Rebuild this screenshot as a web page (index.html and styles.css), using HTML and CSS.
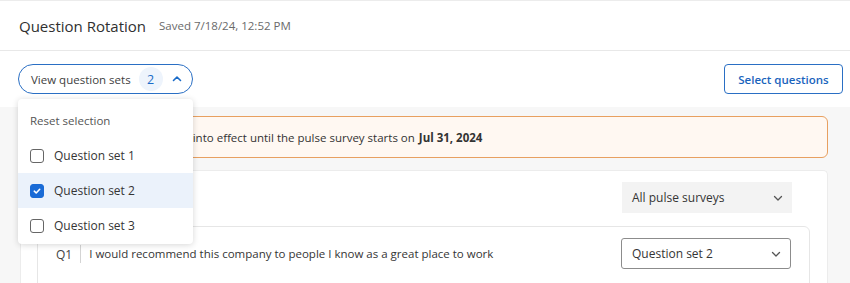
FILE: index.html
```html
<!DOCTYPE html>
<html>
<head>
<meta charset="utf-8">
<link rel="stylesheet" href="styles.css">
</head>
<body>
<header class="header">
  <h1 class="title">Question Rotation</h1>
  <span class="saved">Saved 7/18/24, 12:52 PM</span>
</header>
<div class="toolbar">
  <button class="pill">
    <span>View question sets</span>
    <span class="badge">2</span>
    <svg class="chev" width="10" height="10" viewBox="0 0 10 10"><path d="M1.5 6.5 L5 3 L8.5 6.5" fill="none" stroke="#1a6bc8" stroke-width="1.6" stroke-linecap="round" stroke-linejoin="round"/></svg>
  </button>
  <button class="select-btn">Select questions</button>
  <div class="menu">
    <div class="menu-reset">Reset selection</div>
    <label class="menu-item"><span class="cb"></span>Question set 1</label>
    <label class="menu-item active"><span class="cb checked"><svg width="10" height="10" viewBox="0 0 10 10"><path d="M2.3 5.2 L4.2 7 L7.7 3.3" fill="none" stroke="#fff" stroke-width="1.6" stroke-linecap="round" stroke-linejoin="round"/></svg></span>Question set 2</label>
    <label class="menu-item"><span class="cb"></span>Question set 3</label>
  </div>
</div>
<main class="main">
  <div class="banner">Question changes won't go into effect until the pulse survey starts on <b>Jul 31, 2024</b></div>
  <section class="card">
    <div class="card-top">
      <div class="dd dd-flat"><span>All pulse surveys</span><svg width="10" height="10" viewBox="0 0 10 10"><path d="M1.5 3.5 L5 7 L8.5 3.5" fill="none" stroke="#555" stroke-width="1.3" stroke-linecap="round" stroke-linejoin="round"/></svg></div>
    </div>
    <div class="row">
      <span class="qnum">Q1</span>
      <span class="qtext">I would recommend this company to people I know as a great place to work</span>
      <div class="dd dd-border"><span>Question set 2</span><svg width="10" height="10" viewBox="0 0 10 10"><path d="M1.5 3.5 L5 7 L8.5 3.5" fill="none" stroke="#555" stroke-width="1.3" stroke-linecap="round" stroke-linejoin="round"/></svg></div>
    </div>
  </section>
</main>
</body>
</html>
```
FILE: styles.css
```css
* { box-sizing: border-box; }
html, body { margin: 0; padding: 0; }
body {
  width: 850px;
  height: 283px;
  overflow: hidden;
  background: #fff;
  font-family: "Open Sans", "Noto Sans", sans-serif;
  color: #333;
}
.header {
  height: 51px;
  border-top: 1px solid #ececec;
  border-bottom: 1px solid #e8e8e8;
  display: flex;
  align-items: center;
  padding-left: 19px;
  gap: 13px;
}
.title {
  margin: 0;
  font-size: 15px;
  font-weight: 400;
  color: #303030;
}
.saved {
  font-size: 11.5px;
  color: #6a6a6a;
}
.toolbar {
  position: relative;
  height: 56px;
  display: flex;
  align-items: center;
  justify-content: space-between;
  padding: 0 7px 0 18px;
}
.pill {
  height: 30px;
  border: 1px solid #2a6fc4;
  border-radius: 15px;
  background: #fff;
  display: flex;
  align-items: center;
  padding: 0 10px 0 12px;
  font-family: inherit;
  font-size: 11.5px;
  color: #404040;
  white-space: nowrap;
  width: 175px;
}
.badge {
  width: 24px;
  height: 24px;
  border-radius: 50%;
  background: #eef4fc;
  color: #1a6bc8;
  display: inline-flex;
  align-items: center;
  justify-content: center;
  margin-left: 8px;
  font-size: 12.5px;
}
.chev { margin-left: 9px; }
.select-btn {
  height: 30px;
  width: 119px;
  border: 1px solid #2a6fc4;
  border-radius: 4px;
  background: #fff;
  color: #1a64bd;
  font-family: inherit;
  font-size: 11.5px;
  font-weight: 600;
  white-space: nowrap;
}
.menu {
  position: absolute;
  left: 18px;
  top: 48px;
  width: 175px;
  background: #fff;
  border-radius: 4px;
  box-shadow: 0 1px 6px rgba(0,0,0,0.16);
  padding-top: 3px;
  padding-bottom: 1px;
  z-index: 5;
}
.menu-reset {
  height: 36px;
  display: flex;
  align-items: center;
  padding-left: 12px;
  font-size: 11.5px;
  color: #555;
}
.menu-item {
  height: 35px;
  display: flex;
  align-items: center;
  padding-left: 12px;
  font-size: 12px;
  color: #353535;
  gap: 10px;
}
.menu-item.active { background: #ebf2fb; }
.cb {
  width: 14px;
  height: 14px;
  border: 1.3px solid #666;
  border-radius: 3px;
  background: #fff;
  display: inline-flex;
  align-items: center;
  justify-content: center;
}
.cb.checked {
  background: #1a6bd6;
  border-color: #1a6bd6;
}
.main {
  background: #f7f7f7;
  padding: 9px 22px 0 20px;
  height: 176px;
  overflow: hidden;
}
.banner {
  height: 42px;
  border: 1px solid #e8a060;
  border-radius: 6px;
  background: #fff8f2;
  display: flex;
  align-items: center;
  padding-left: 24px;
  font-size: 11.5px;
  color: #333;
  white-space: nowrap;
  overflow: hidden;
}
.banner b { font-weight: 700; margin-left: 4px; }
.card {
  margin-top: 12px;
  background: #fff;
  border: 1px solid #ececec;
  border-bottom: none;
  border-radius: 5px 5px 0 0;
  height: 113px;
  padding: 11px 17px 0 16px;
  overflow: hidden;
}
.card-top {
  display: flex;
  justify-content: flex-end;
  padding-right: 18px;
}
.dd {
  width: 170px;
  height: 31px;
  display: flex;
  align-items: center;
  justify-content: space-between;
  padding: 0 9px 0 10px;
  font-size: 12px;
  color: #353535;
}
.dd-flat { background: #f3f3f3; }
.dd-border {
  border: 1px solid #8c8c8c;
  border-radius: 3px;
  background: #fff;
}
.row {
  margin-top: 13px;
  height: 70px;
  border: 1px solid #e6e6e6;
  border-radius: 6px;
  display: flex;
  align-items: flex-start;
  padding: 11px 18px 0 18px;
}
.qnum {
  font-size: 12px;
  color: #444;
  display: flex;
  align-items: center;
  padding-right: 8px;
  border-right: 1px solid #d4d4d4;
  height: 18px;
  margin-top: 7px;
}
.qtext {
  flex: 1;
  font-size: 11.5px;
  color: #353535;
  padding-left: 8px;
  margin-top: 7px;
  line-height: 18px;
}
```
